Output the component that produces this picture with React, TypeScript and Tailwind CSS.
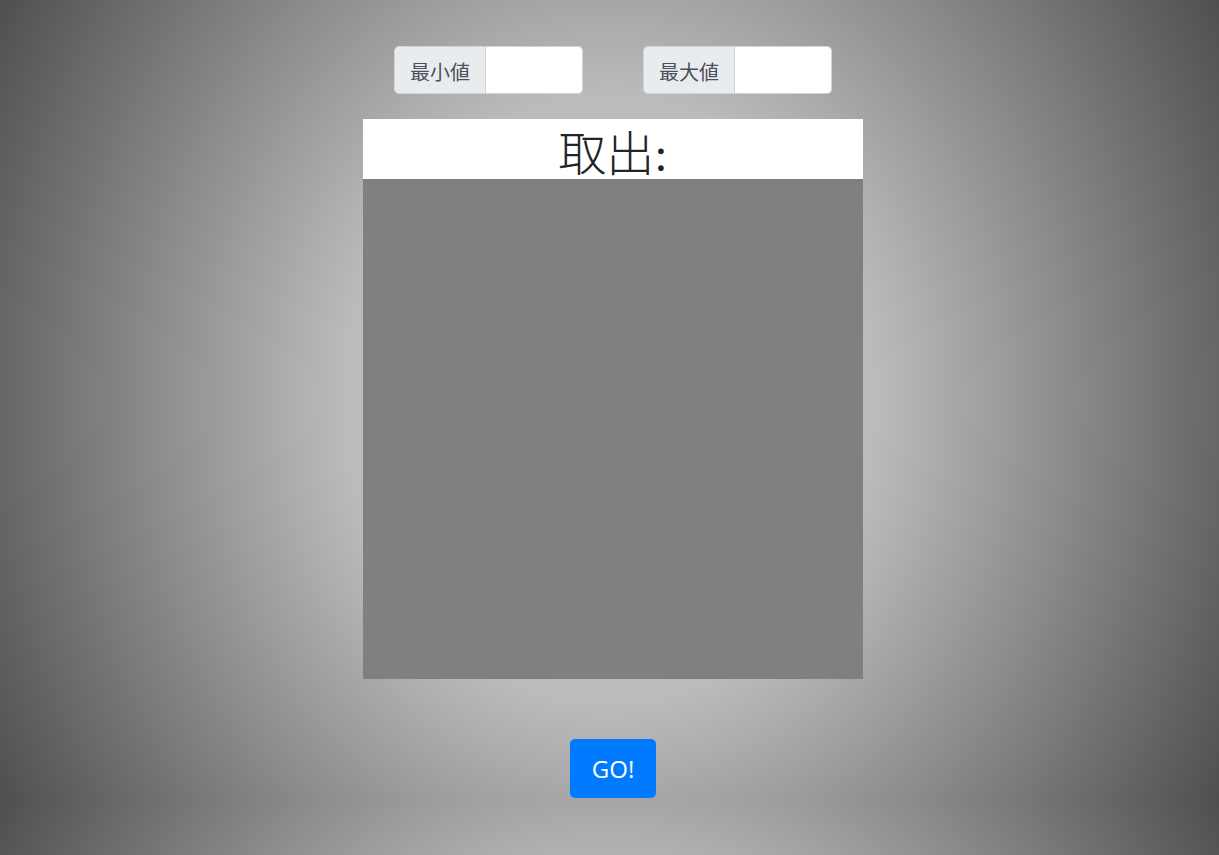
const groups = ['最小値', '最大値'];

const InputGroup = ({ label }: { label: string }) => (
  <div className="flex h-[48px] w-[189px]">
    <span className="flex h-full w-[92px] items-center justify-center rounded-l-[5px] border border-[#ced4da] bg-[#e9ecef] pt-[3px] text-[20px] text-[#495057] [font-family:'Noto_Sans_CJK_JP',sans-serif]">
      {label}
    </span>
    <input
      type="text"
      className="h-full w-[97px] rounded-r-[5px] border border-l-0 border-[#ced4da] bg-white px-3 text-[20px] outline-none"
    />
  </div>
);

export default function App() {
  return (
    <div className="min-h-[855px] w-full bg-[radial-gradient(ellipse_700px_800px_at_50%_50%,#c2c2c2_0%,#bbbbbb_38%,#505050_100%)] bg-[length:100%_800px] bg-repeat">
      <div className="flex flex-col items-center pl-[7px] pt-[46px]">
        <div className="flex gap-[60px]">
          {groups.map((g) => (
            <InputGroup key={g} label={g} />
          ))}
        </div>

        <div className="mt-[25px] w-[500px]">
          <div className="flex h-[60px] items-end justify-center overflow-visible bg-white">
            <span className="text-[48px] font-light leading-[48px] text-[#212529] [font-family:'Liberation_Serif','Noto_Sans_CJK_JP',serif]">
              取出:
            </span>
          </div>
          <div className="h-[500px] bg-[#808080]" />
        </div>

        <button className="mt-[60px] flex h-[59px] w-[86px] items-center justify-center rounded-[5px] bg-[#007bff] text-[24px] text-white [font-family:'Open_Sans',sans-serif]">
          GO!
        </button>
      </div>
    </div>
  );
}
